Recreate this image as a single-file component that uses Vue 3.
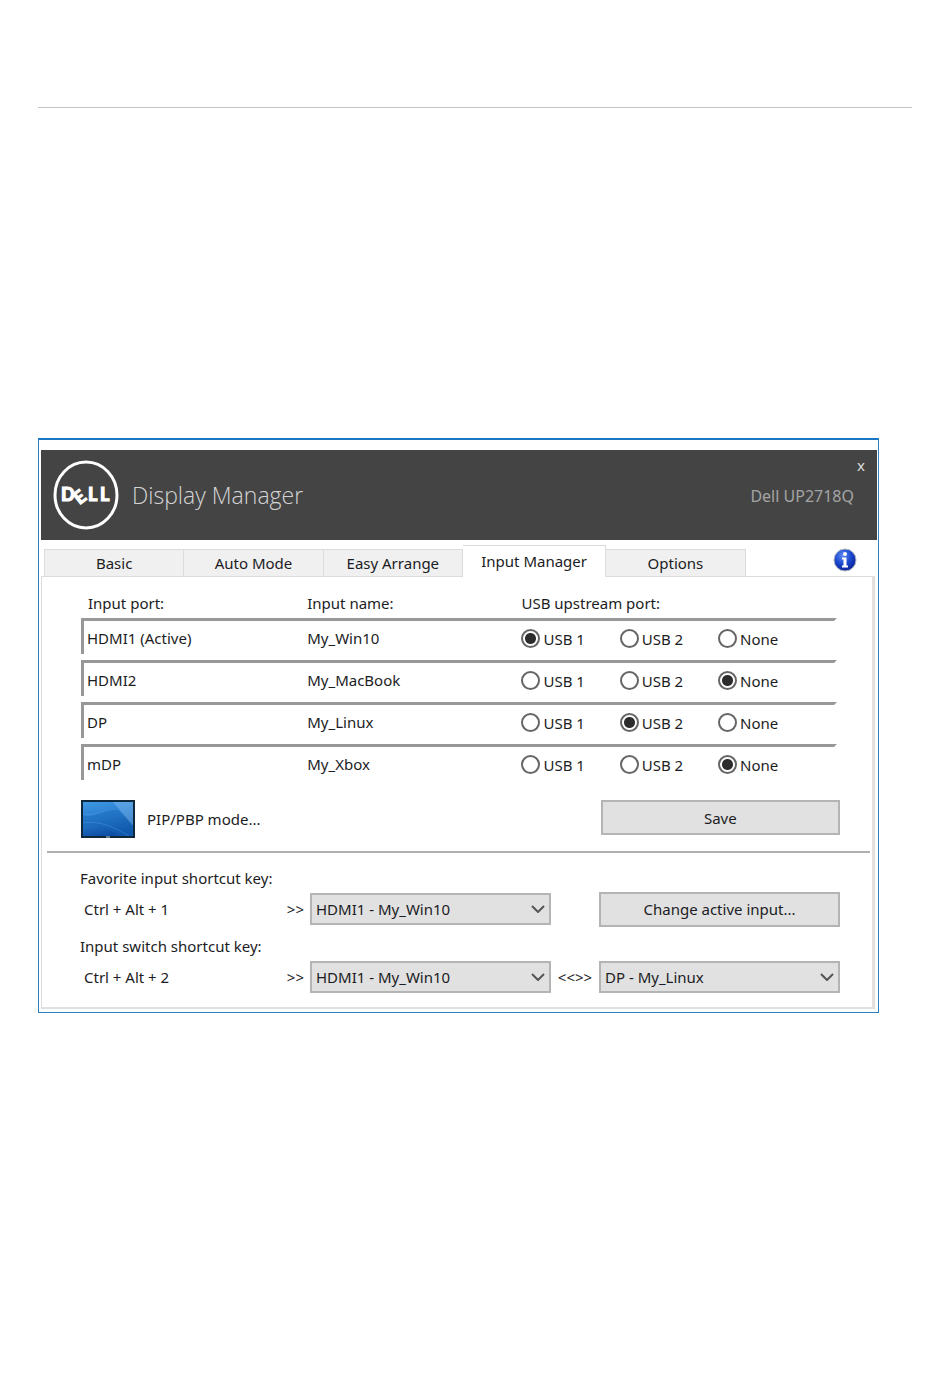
<!-- eslint-disable vue/multi-word-component-names -->

<template>
  <main class="page">
    <hr class="page-rule" />

    <section class="window">
      <header class="titlebar">
        <svg class="logo" viewBox="0 0 66 70" role="img" aria-label="Dell">
          <ellipse cx="33" cy="35" rx="31" ry="33" />
          <text x="8" y="41">D</text>
          <text x="21" y="43" transform="rotate(-38 27 36)">E</text>
          <text x="35" y="41">L</text>
          <text x="47" y="41">L</text>
        </svg>
        <h1>Display Manager</h1>
        <div class="title-side">
          <button class="close" type="button">x</button>
          <span class="model">Dell UP2718Q</span>
        </div>
      </header>

      <nav class="tabs">
        <button
          v-for="tab in tabs"
          :key="tab"
          type="button"
          class="tab"
          :class="{ active: tab === activeTab }"
          @click="activeTab = tab"
        >
          {{ tab }}
        </button>
        <div class="tabs-end">
          <button class="info" type="button" aria-label="Information">
            <svg viewBox="0 0 24 24">
              <defs>
                <radialGradient id="infoFill" cx="40%" cy="30%" r="75%">
                  <stop offset="0" stop-color="#5f8cf0" />
                  <stop offset="0.5" stop-color="#1c48d0" />
                  <stop offset="1" stop-color="#0a2090" />
                </radialGradient>
              </defs>
              <circle cx="12" cy="12" r="11" fill="url(#infoFill)" stroke="#b4b8c4" />
              <circle cx="12" cy="6" r="2" fill="#fff" />
              <path d="M9 9.500h4.500v8h1.500v2H9v-2h1.500v-6H9z" fill="#fff" />
            </svg>
          </button>
        </div>
      </nav>

      <div class="panel">
        <div class="content">
          <table class="inputs">
            <colgroup>
              <col class="col-port" />
              <col class="col-name" />
              <col class="col-usb" />
              <col class="col-usb" />
              <col />
            </colgroup>
            <thead>
              <tr>
                <th>Input port:</th>
                <th>Input name:</th>
                <th class="usb" colspan="3">USB upstream port:</th>
              </tr>
            </thead>
            <tbody>
              <tr v-for="input in inputs" :key="input.port">
                <td class="port">{{ input.port }}</td>
                <td>{{ input.name }}</td>
                <td v-for="option in usbOptions" :key="option" class="usb">
                  <label class="radio">
                    <input v-model="input.usb" type="radio" :name="input.name" :value="option" />
                    {{ option }}
                  </label>
                </td>
              </tr>
            </tbody>
          </table>

          <div class="mode-row">
            <a class="pip" href="#">
              <svg viewBox="0 0 54 38">
                <defs>
                  <linearGradient id="screenFill" x1="0" y1="0" x2="0.3" y2="1">
                    <stop offset="0" stop-color="#3f9be6" />
                    <stop offset="0.5" stop-color="#2a7ccd" />
                    <stop offset="1" stop-color="#0c4fa4" />
                  </linearGradient>
                </defs>
                <rect x="1" y="1" width="52" height="36" fill="url(#screenFill)" />
                <path d="M1 15C14 19 24 8 36 9L53 26V37H40C26 26 14 24 1 27Z" fill="#1768b8" opacity="0.400" />
                <path d="M1 14C15 18 24 7 37 10M1 23C16 20 32 26 48 36" fill="none" stroke="#62b0ee" opacity="0.300" />
                <path d="M31 1H53V27Z" fill="#8bc4f4" opacity="0.400" />
                <rect x="1" y="1" width="52" height="36" fill="none" stroke="#10283c" stroke-width="2" />
                <path d="M25 37h4" stroke="#b9d4e8" stroke-width="1" />
              </svg>
              <span>PIP/PBP mode...</span>
            </a>
            <button class="btn" type="button">Save</button>
          </div>
        </div>

        <hr class="divider" />

        <div class="content shortcuts">
          <h2>Favorite input shortcut key:</h2>
          <div class="shortcut-row">
            <div class="keys">
              <span>Ctrl + Alt + 1</span>
              <span>&gt;&gt;</span>
            </div>
            <div class="select">
              <select v-model="favorite" aria-label="Favorite input">
                <option v-for="item in choices" :key="item">{{ item }}</option>
              </select>
              <svg viewBox="0 0 14 8"><path d="M1 1l6 6 6-6" /></svg>
            </div>
            <span></span>
            <button class="btn" type="button">Change active input...</button>
          </div>

          <h2>Input switch shortcut key:</h2>
          <div class="shortcut-row">
            <div class="keys">
              <span>Ctrl + Alt + 2</span>
              <span>&gt;&gt;</span>
            </div>
            <div class="select">
              <select v-model="switchFrom" aria-label="Switch from">
                <option v-for="item in choices" :key="item">{{ item }}</option>
              </select>
              <svg viewBox="0 0 14 8"><path d="M1 1l6 6 6-6" /></svg>
            </div>
            <span class="swap">&lt;&lt;&gt;&gt;</span>
            <div class="select">
              <select v-model="switchTo" aria-label="Switch to">
                <option v-for="item in choices" :key="item">{{ item }}</option>
              </select>
              <svg viewBox="0 0 14 8"><path d="M1 1l6 6 6-6" /></svg>
            </div>
          </div>
        </div>
      </div>
    </section>
  </main>
</template>

<script setup>
import { ref } from "vue";

const tabs = ["Basic", "Auto Mode", "Easy Arrange", "Input Manager", "Options"];
const activeTab = ref("Input Manager");

const usbOptions = ["USB 1", "USB 2", "None"];
const inputs = ref([
  { port: "HDMI1 (Active)", name: "My_Win10", usb: "USB 1" },
  { port: "HDMI2", name: "My_MacBook", usb: "None" },
  { port: "DP", name: "My_Linux", usb: "USB 2" },
  { port: "mDP", name: "My_Xbox", usb: "None" },
]);

const choices = ["HDMI1 - My_Win10", "HDMI2 - My_MacBook", "DP - My_Linux", "mDP - My_Xbox"];
const favorite = ref("HDMI1 - My_Win10");
const switchFrom = ref("HDMI1 - My_Win10");
const switchTo = ref("DP - My_Linux");
</script>

<style>
body {
  margin: 0;
  background: #fff;
}
</style>

<style scoped>
* {
  box-sizing: border-box;
}
.page {
  padding: 107px 38px 40px;
  font-family: "Noto Sans", sans-serif;
  font-size: 15px;
  line-height: 20px;
  color: #1c1c24;
}
button,
select {
  font: inherit;
  color: inherit;
}
.page-rule {
  margin: 0;
  border: 0;
  border-top: 1px solid #c4c4c4;
}
.window {
  margin: 330px 33px 0 0;
  padding: 10px 1px 3px 2px;
  border: 1px solid #2f7fc0;
  border-top: 2px solid #1b76c4;
}
.titlebar {
  display: flex;
  align-items: center;
  height: 90px;
  padding: 0 12px;
  background: #444;
}
.logo {
  width: 66px;
  height: 70px;
}
.logo ellipse {
  fill: none;
  stroke: #fff;
  stroke-width: 3;
}
.logo text {
  fill: #fff;
  stroke: #fff;
  stroke-width: 1;
  font: 900 18px "Lato", sans-serif;
}
h1 {
  margin: 0 0 0 13px;
  font-family: "Open Sans", sans-serif;
  font-weight: 300;
  font-size: 23px;
  line-height: 30px;
  color: #d4d4d4;
}
.title-side {
  display: flex;
  flex-direction: column;
  align-items: flex-end;
  align-self: stretch;
  margin-left: auto;
}
.close {
  height: 30px;
  padding: 0;
  border: 0;
  background: none;
  color: #ddd;
}
.model {
  margin-right: 11px;
  font-size: 16px;
  line-height: 32px;
  color: #a4a4a4;
}
.tabs {
  display: flex;
  align-items: flex-end;
  height: 36px;
  padding: 0 3px;
}
.tab {
  flex: 140;
  height: 27px;
  padding: 0;
  border: 1px solid #dcdcdc;
  border-width: 1px 1px 0 0;
  background: #f0f0f0;
}
.tab:first-child {
  border-left-width: 1px;
}
.tab.active {
  flex: 144;
  height: 32px;
  margin-bottom: -1px;
  padding-bottom: 2px;
  background: #fff;
  z-index: 1;
}
.tabs-end {
  display: flex;
  justify-content: flex-end;
  align-self: flex-start;
  flex: 130;
}
.info {
  width: 24px;
  height: 24px;
  margin: 8px 17px 0 0;
  padding: 0;
  border: 0;
  background: none;
}
.info svg {
  display: block;
}
.panel {
  margin-right: 2px;
  padding-top: 14px;
  border: 1px solid #dcdcdc;
  border-right: 3px solid #e4e0dc;
  border-bottom: 2px solid #e0e0e0;
}
.content {
  padding: 0 35px 0 39px;
}
.inputs {
  width: 100%;
  table-layout: fixed;
  border-collapse: separate;
  border-spacing: 0 6px;
  margin: -3px 0 0;
}
.col-port {
  width: 29%;
}
.col-name {
  width: 29%;
}
.col-usb {
  width: 13%;
}
th {
  padding: 0 0 0 7px;
  text-align: left;
  font-weight: normal;
  line-height: 18px;
}
td {
  height: 36px;
  padding: 0 0 0 7px;
  border-top: 3px solid #989898;
}
.port {
  padding-left: 3px;
  border-left: 3px solid #989898;
}
.usb {
  padding-left: 2px;
}
td:last-child {
  border-right: 3px solid transparent;
}
.radio {
  display: flex;
  align-items: center;
  gap: 3px;
  padding-top: 2px;
}
.radio input {
  appearance: none;
  width: 19px;
  height: 19px;
  margin: 0;
  border: 2px solid #666;
  border-radius: 50%;
  background: #fff;
}
.radio input:checked {
  background: radial-gradient(circle, #2c2c2c 5px, #fff 6px);
}
.mode-row {
  display: grid;
  grid-template-columns: 519fr 239fr;
  margin-right: -3px;
  padding-top: 14px;
}
.pip {
  display: flex;
  align-items: center;
  gap: 12px;
  color: inherit;
  text-decoration: none;
}
.pip svg {
  width: 54px;
  height: 38px;
}
.btn {
  height: 35px;
  padding: 0;
  border: 2px solid #b4b4b4;
  background: #e1e1e1;
}
.divider {
  height: 2px;
  margin: 13px 2px 14px 5px;
  border: 0;
  background: #b0b0b0;
}
.shortcuts {
  padding: 0 32px 4px 38px;
}
h2 {
  margin: 0 0 2px;
  font-size: 15px;
  font-weight: normal;
  line-height: 22px;
}
.shortcut-row {
  display: grid;
  grid-template-columns: 230fr 241fr 48fr 241fr;
  align-items: center;
  height: 36px;
  margin-bottom: 8px;
}
.keys {
  display: flex;
  justify-content: space-between;
  padding: 0 6px 0 4px;
}
.select {
  position: relative;
}
select {
  appearance: none;
  display: block;
  width: 100%;
  height: 32px;
  padding: 0 30px 0 4px;
  border: 2px solid #b4b4b4;
  border-radius: 0;
  background: #e1e1e1;
}
.select svg {
  position: absolute;
  top: 12px;
  right: 6px;
  width: 14px;
  height: 8px;
  fill: none;
  stroke: #555;
  stroke-width: 2;
  pointer-events: none;
}
.swap {
  text-align: center;
}
</style>
